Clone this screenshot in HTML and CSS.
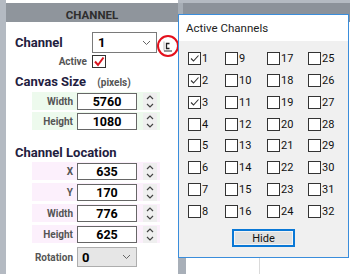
FILE: index.html
```html
<!DOCTYPE html>
<html lang="en">
  <head>
    <meta charset="UTF-8" />
    <meta name="viewport" content="width=device-width, initial-scale=1.0" />
    <title>Channel</title>
    <link rel="stylesheet" href="styles.css">
  </head>
  <body>
    <div class="strip"></div>

    <div class="panel">
      <div class="panel-head">CHANNEL</div>
      <div class="panel-body">
        <div class="chan-row">
          <span class="big-label">Channel</span>
          <div class="drop chan-drop">
            <b>1</b>
            <svg width="9" height="6" viewBox="0 0 9 6"><polyline points="1,1 4.5,4.5 8,1" fill="none" stroke="#666" stroke-width="1"/></svg>
          </div>
          <span class="tiny-btn">
            <svg width="9" height="11" viewBox="0 0 9 11">
              <path d="M1 0.5 V9.5" stroke="#bbb" stroke-width="1" fill="none"/>
              <path d="M6.5 2.5 H3.5 V7.5 H6.5" stroke="#222" stroke-width="1.3" fill="none"/>
              <path d="M1 10 H9" stroke="#333" stroke-width="1" fill="none"/>
            </svg>
          </span>
        </div>
        <div class="active-row">
          <span class="small-label">Active</span>
          <span class="red-box">
            <svg width="12" height="11" viewBox="0 0 12 11"><polyline points="2,5.5 5,9 10.5,1.5" fill="none" stroke="#d8141e" stroke-width="2"/></svg>
          </span>
        </div>

        <div class="heading canvas-head">Canvas Size <span class="unit">(pixels)</span></div>
        <div class="group canvas-group">
          <div class="field green">
            <span class="small-label">Width</span>
            <span class="num">5760</span>
            <span class="spin"><svg width="14" height="17" viewBox="0 0 14 17"><polyline points="4,6 7,3 10,6" fill="none" stroke="#444" stroke-width="1.2"/><polyline points="4,11 7,14 10,11" fill="none" stroke="#444" stroke-width="1.2"/></svg></span>
          </div>
          <div class="field green">
            <span class="small-label">Height</span>
            <span class="num">1080</span>
            <span class="spin"><svg width="14" height="17" viewBox="0 0 14 17"><polyline points="4,6 7,3 10,6" fill="none" stroke="#444" stroke-width="1.2"/><polyline points="4,11 7,14 10,11" fill="none" stroke="#444" stroke-width="1.2"/></svg></span>
          </div>
        </div>

        <div class="heading loc-head">Channel Location</div>
        <div class="group loc-group">
          <div class="field pink">
            <span class="small-label">X</span>
            <span class="num">635</span>
            <span class="spin"><svg width="14" height="17" viewBox="0 0 14 17"><polyline points="4,6 7,3 10,6" fill="none" stroke="#444" stroke-width="1.2"/><polyline points="4,11 7,14 10,11" fill="none" stroke="#444" stroke-width="1.2"/></svg></span>
          </div>
          <div class="field pink">
            <span class="small-label">Y</span>
            <span class="num">170</span>
            <span class="spin"><svg width="14" height="17" viewBox="0 0 14 17"><polyline points="4,6 7,3 10,6" fill="none" stroke="#444" stroke-width="1.2"/><polyline points="4,11 7,14 10,11" fill="none" stroke="#444" stroke-width="1.2"/></svg></span>
          </div>
          <div class="field pink">
            <span class="small-label">Width</span>
            <span class="num">776</span>
            <span class="spin"><svg width="14" height="17" viewBox="0 0 14 17"><polyline points="4,6 7,3 10,6" fill="none" stroke="#444" stroke-width="1.2"/><polyline points="4,11 7,14 10,11" fill="none" stroke="#444" stroke-width="1.2"/></svg></span>
          </div>
          <div class="field pink">
            <span class="small-label">Height</span>
            <span class="num">625</span>
            <span class="spin"><svg width="14" height="17" viewBox="0 0 14 17"><polyline points="4,6 7,3 10,6" fill="none" stroke="#444" stroke-width="1.2"/><polyline points="4,11 7,14 10,11" fill="none" stroke="#444" stroke-width="1.2"/></svg></span>
          </div>
        </div>

        <div class="field rot-row">
          <span class="small-label">Rotation</span>
          <div class="drop rot-drop">
            <b>0</b>
            <svg width="9" height="6" viewBox="0 0 9 6"><polyline points="1,1 4.5,4.5 8,1" fill="none" stroke="#666" stroke-width="1"/></svg>
          </div>
        </div>
      </div>
    </div>

    <div class="panel2">
      <div class="panel2-head"></div>
      <div class="panel2-body">
        <div class="gutter"></div>
        <div class="area"></div>
      </div>
    </div>

    <!-- callout ring around the small button -->
    <span class="ring"></span>

    <div class="popup">
      <div class="popup-title">Active Channels</div>
      <div class="popup-body">
        <div class="grid">
          <label class="cb on"><span class="box"><svg width="11" height="11" viewBox="0 0 11 11"><polyline points="2,5.5 4.5,8 9.5,2.5" fill="none" stroke="#333" stroke-width="1.1"/></svg></span>1</label>
          <label class="cb"><span class="box"></span>9</label>
          <label class="cb"><span class="box"></span>17</label>
          <label class="cb"><span class="box"></span>25</label>
          <label class="cb on"><span class="box"><svg width="11" height="11" viewBox="0 0 11 11"><polyline points="2,5.5 4.5,8 9.5,2.5" fill="none" stroke="#333" stroke-width="1.1"/></svg></span>2</label>
          <label class="cb"><span class="box"></span>10</label>
          <label class="cb"><span class="box"></span>18</label>
          <label class="cb"><span class="box"></span>26</label>
          <label class="cb on"><span class="box"><svg width="11" height="11" viewBox="0 0 11 11"><polyline points="2,5.5 4.5,8 9.5,2.5" fill="none" stroke="#333" stroke-width="1.1"/></svg></span>3</label>
          <label class="cb"><span class="box"></span>11</label>
          <label class="cb"><span class="box"></span>19</label>
          <label class="cb"><span class="box"></span>27</label>
          <label class="cb"><span class="box"></span>4</label>
          <label class="cb"><span class="box"></span>12</label>
          <label class="cb"><span class="box"></span>20</label>
          <label class="cb"><span class="box"></span>28</label>
          <label class="cb"><span class="box"></span>5</label>
          <label class="cb"><span class="box"></span>13</label>
          <label class="cb"><span class="box"></span>21</label>
          <label class="cb"><span class="box"></span>29</label>
          <label class="cb"><span class="box"></span>6</label>
          <label class="cb"><span class="box"></span>14</label>
          <label class="cb"><span class="box"></span>22</label>
          <label class="cb"><span class="box"></span>30</label>
          <label class="cb"><span class="box"></span>7</label>
          <label class="cb"><span class="box"></span>15</label>
          <label class="cb"><span class="box"></span>23</label>
          <label class="cb"><span class="box"></span>31</label>
          <label class="cb"><span class="box"></span>8</label>
          <label class="cb"><span class="box"></span>16</label>
          <label class="cb"><span class="box"></span>24</label>
          <label class="cb"><span class="box"></span>32</label>
        </div>
        <button class="hide-btn">Hide</button>
      </div>
    </div>
  </body>
</html>
```

FILE: styles.css
```css
body {
  margin: 0;
  width: 350px;
  height: 274px;
  overflow: hidden;
  display: flex;
  background-color: #b4bac2;
  font-family: Roboto, "Liberation Sans", sans-serif;
}
.strip {
  width: 6px;
  flex-shrink: 0;
}

/* left panel */
.panel {
  width: 172px;
  flex-shrink: 0;
  display: flex;
  flex-direction: column;
  background-color: white;
}
.panel-head {
  margin-top: 3px;
  height: 19px;
  box-sizing: border-box;
  padding-top: 5px;
  line-height: 14px;
  text-align: center;
  font-size: 11.5px;
  font-weight: bold;
  color: #2e2e2e;
  background-color: #8f959c;
}
.panel-body {
  padding-left: 9px;
  display: flex;
  flex-direction: column;
}
.chan-row {
  margin-top: 10px;
  height: 21px;
  display: flex;
  align-items: center;
}
.big-label {
  width: 77px;
  font-size: 13px;
  font-weight: bold;
  color: #1f2140;
}
.heading {
  height: 15px;
  line-height: 15px;
  font-size: 13px;
  font-weight: bold;
  color: #1f2140;
}
.unit {
  margin-left: 8px;
  font-size: 10px;
  color: #555;
}
.canvas-head {
  margin-top: 6px;
}
.loc-head {
  margin-top: 15px;
}
.drop {
  box-sizing: border-box;
  display: flex;
  align-items: center;
  justify-content: space-between;
  font-size: 13px;
}
.chan-drop {
  width: 65px;
  height: 21px;
  padding: 0 5px 0 5px;
  border: 1px solid #7a7a7a;
  background-color: white;
}
.tiny-btn {
  margin-left: 6px;
  margin-top: 7px;
  display: flex;
}
.active-row {
  margin-top: 2px;
  height: 13px;
  display: flex;
  align-items: center;
}
.active-row .small-label {
  width: 77px;
  box-sizing: border-box;
  padding-right: 5px;
}
.small-label {
  font-size: 10px;
  font-weight: bold;
  color: #555;
  text-align: right;
}
.red-box {
  width: 14px;
  height: 13px;
  box-sizing: border-box;
  border: 1px solid #333;
  display: flex;
  align-items: center;
  justify-content: center;
  background-color: white;
}

/* numeric rows */
.group {
  display: flex;
  flex-direction: column;
}
.canvas-group {
  margin-top: 3px;
  gap: 2px;
}
.loc-group {
  margin-top: 2px;
  gap: 3px;
}
.field {
  margin-left: 17px;
  width: 128px;
  height: 18px;
  display: flex;
  align-items: flex-end;
}
.field .small-label {
  width: 43px;
  box-sizing: border-box;
  padding-right: 2px;
  align-self: center;
}
.green {
  background-color: #edfaed;
}
.pink {
  background-color: #fcf0fc;
}
.num {
  margin-left: 2px;
  width: 60px;
  height: 17px;
  box-sizing: border-box;
  border: 1px solid #666;
  background-color: white;
  text-align: center;
  line-height: 15px;
  font-size: 12.5px;
  font-weight: bold;
  color: black;
}
.spin {
  margin-left: 6px;
  width: 14px;
  height: 17px;
  display: flex;
  background-color: #efefef;
}
.rot-row {
  margin-top: 4px;
  height: 20px;
  align-items: center;
}
.rot-drop {
  margin-left: 2px;
  width: 60px;
  height: 20px;
  padding: 0 5px 0 4px;
  border: 1px solid #adadad;
  background-color: #e6e6e6;
}

/* panel behind the popup */
.panel2 {
  flex: 1;
  display: flex;
  flex-direction: column;
}
.panel2-head {
  margin-top: 3px;
  height: 19px;
  border-left: 5px solid #a6adb5;
  background-color: #8c929a;
}
.panel2-body {
  flex: 1;
  display: flex;
}
.gutter {
  width: 8px;
  background-color: #a8afb8;
}
.area {
  flex: 1;
  background-color: white;
  background-image: linear-gradient(#dadada, #dadada);
  background-size: 1px 100%;
  background-position: 73px 0;
  background-repeat: no-repeat;
}

.ring {
  position: absolute;
  left: 157px;
  top: 35px;
  width: 22px;
  height: 22px;
  box-sizing: border-box;
  border: 2.5px solid #e4101c;
  border-radius: 50%;
}

/* popup */
.popup {
  position: absolute;
  left: 178px;
  top: 14px;
  width: 171px;
  height: 244px;
  box-sizing: border-box;
  border: 1px solid #3a8ddb;
  display: flex;
  flex-direction: column;
  background-color: #f0f0f0;
}
.popup-title {
  height: 26px;
  padding-left: 7px;
  line-height: 27px;
  font-size: 11.5px;
  color: #222;
  background-color: white;
}
.popup-body {
  flex: 1;
  display: flex;
  flex-direction: column;
  align-items: center;
}
.grid {
  align-self: stretch;
  margin-top: 11px;
  padding-left: 9px;
  display: grid;
  grid-template-columns: 37px 42px 41px auto;
  grid-auto-rows: 13px;
  row-gap: 8.86px;
}
.cb {
  display: flex;
  align-items: center;
  gap: 1px;
  font-size: 11px;
  color: #111;
}
.box {
  width: 13px;
  height: 13px;
  box-sizing: border-box;
  border: 1px solid #333;
  display: flex;
  align-items: center;
  justify-content: center;
  background-color: white;
}
.hide-btn {
  margin-top: 11px;
  width: 63px;
  height: 18px;
  padding: 0;
  border: 2px solid #0a78d6;
  box-shadow: inset 0 0 0 1px #f4f4f4;
  background-color: #e1e1e1;
  font-family: Roboto, "Liberation Sans", sans-serif;
  font-size: 11px;
  color: #111;
}
```
